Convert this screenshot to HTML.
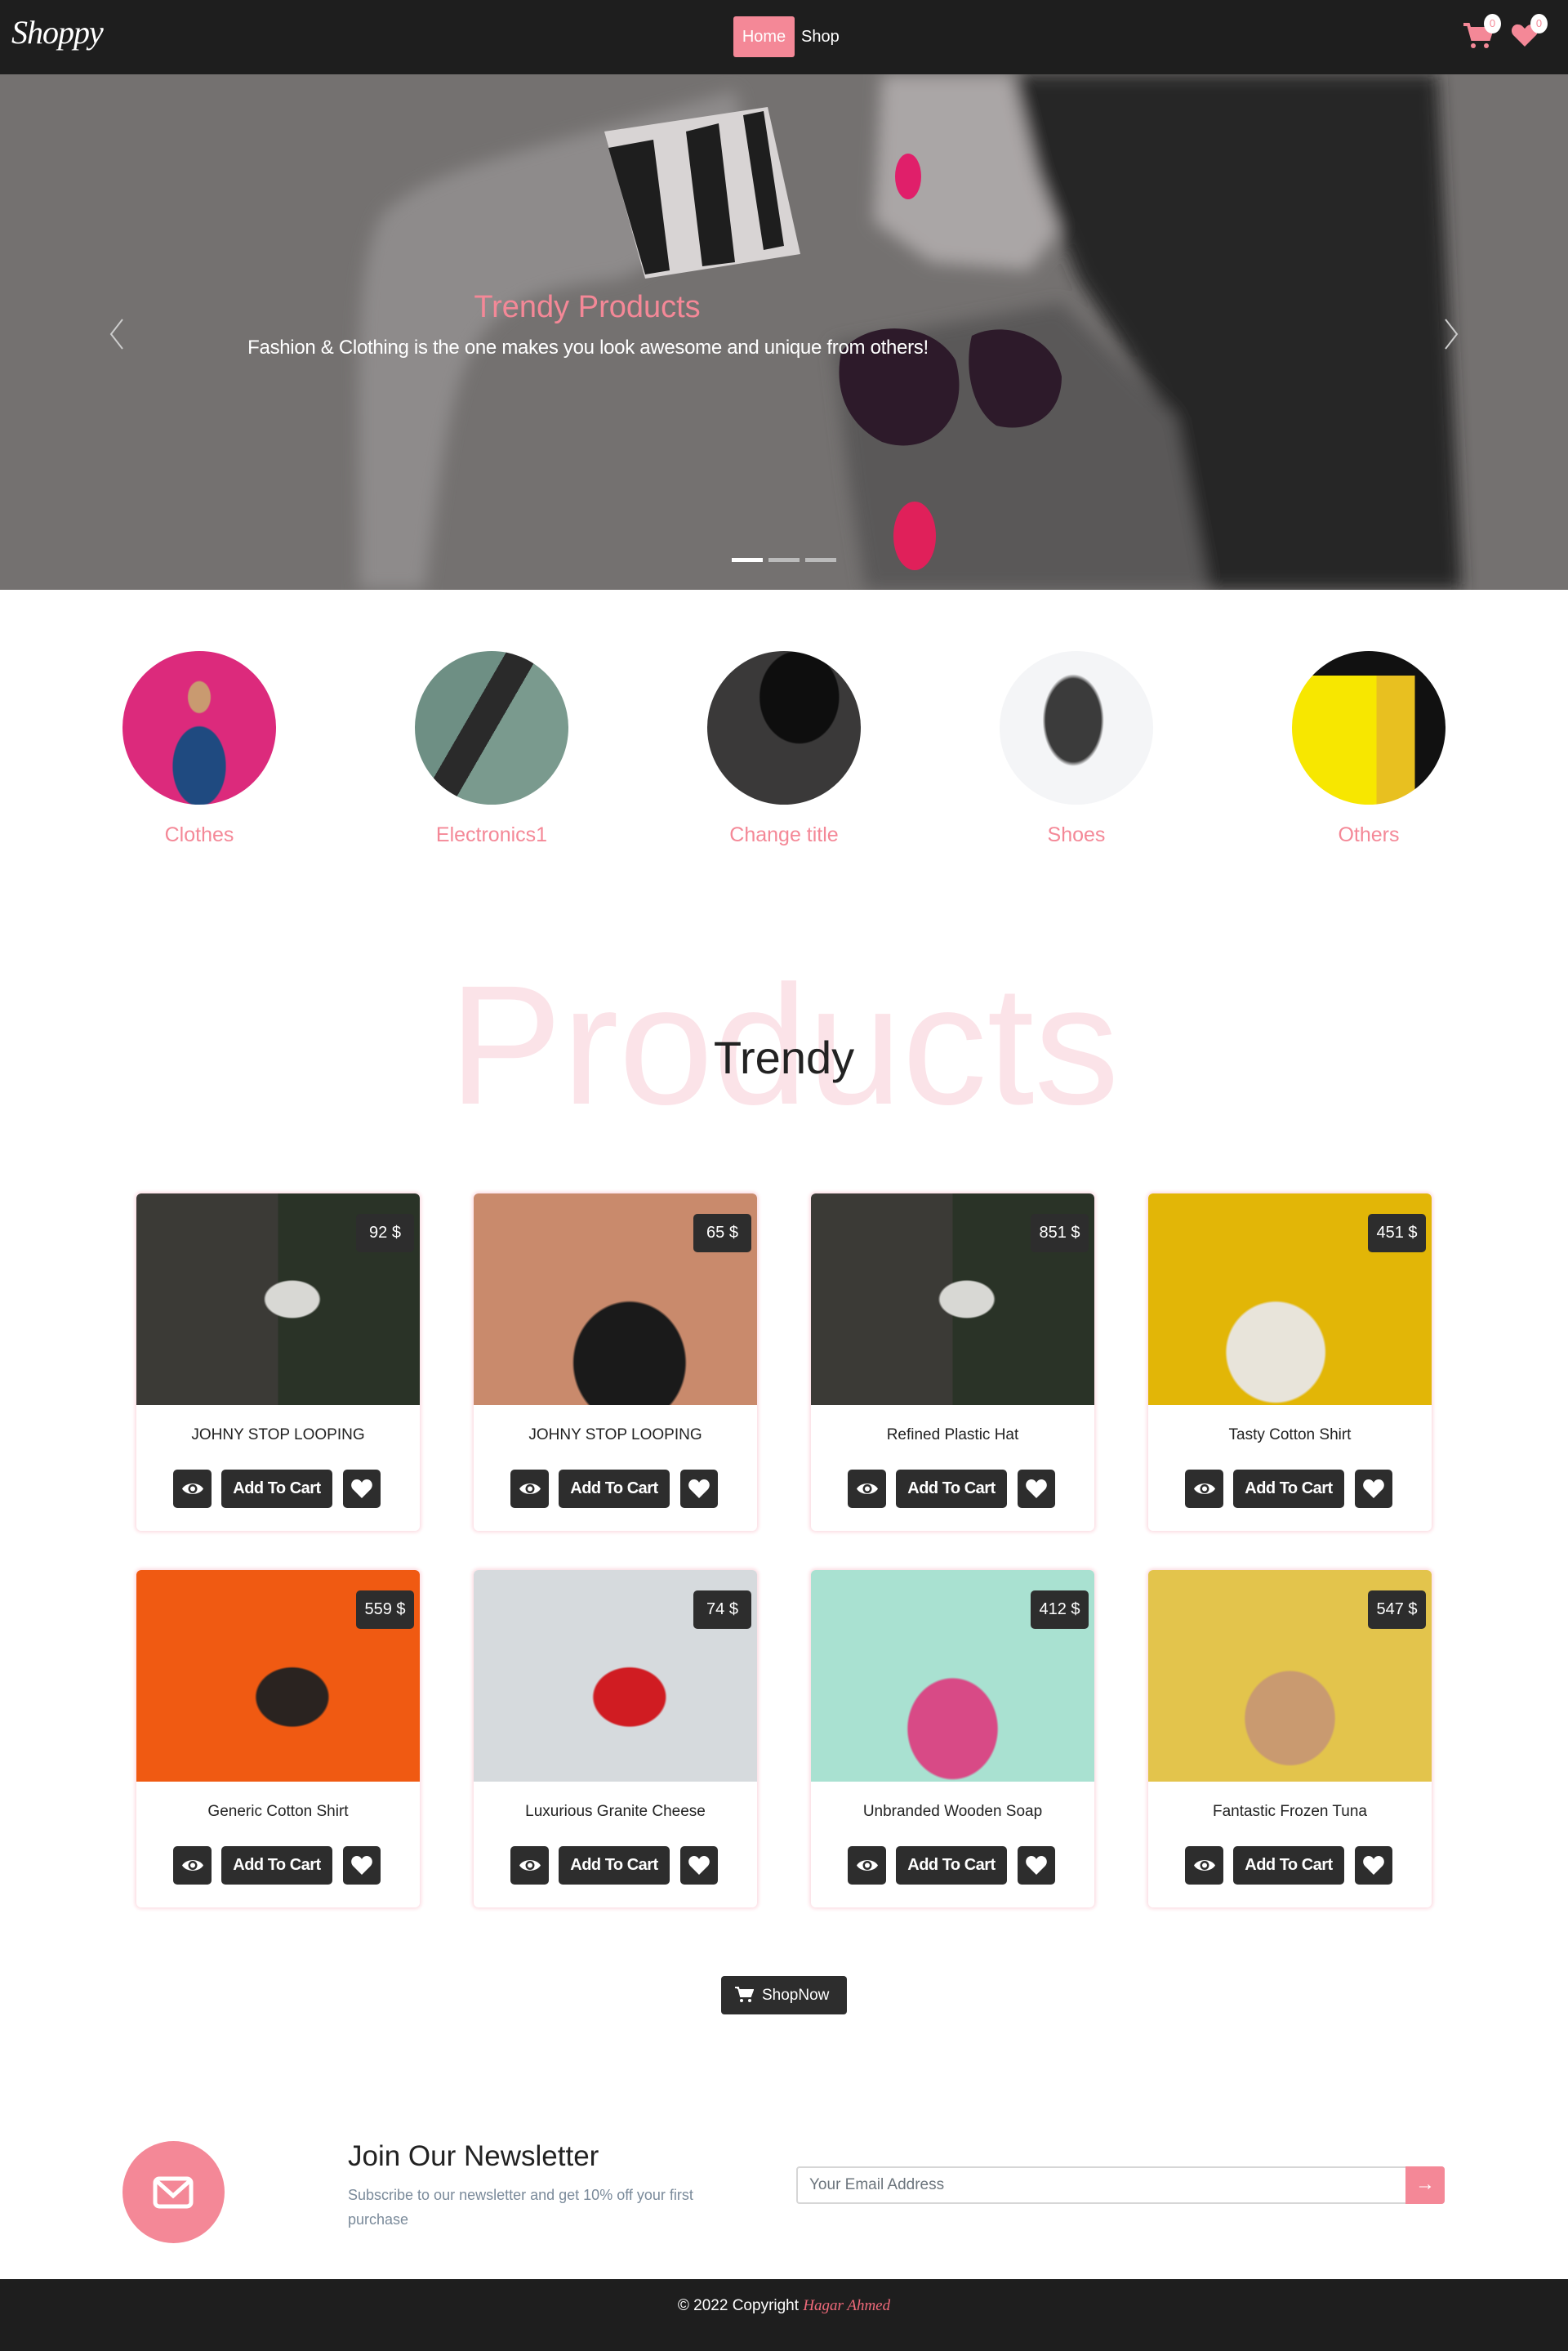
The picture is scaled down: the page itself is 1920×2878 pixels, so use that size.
<!DOCTYPE html>
<html><head><meta charset="utf-8">
<style>
*{box-sizing:border-box;margin:0;padding:0}
body{width:1920px;height:2878px;background:#fff;font-family:"Liberation Sans",sans-serif;position:relative;overflow:hidden}
.nav{position:absolute;left:0;top:0;width:1920px;height:91px;background:#1e1e1e}
.logo{position:absolute;left:14px;top:16px;font-family:"Liberation Serif",serif;font-style:italic;font-size:40px;color:#fff;letter-spacing:-1px}
.home{position:absolute;left:898px;top:20px;width:75px;height:50px;background:#f48897;border-radius:3px;color:#fff;font-size:20px;line-height:50px;text-align:center}
.shop{position:absolute;left:981px;top:20px;color:#fff;font-size:20px;line-height:50px}
.badge{position:absolute;width:21px;height:24px;border-radius:50%;background:#fff;color:#f48897;font-size:13px;text-align:center;line-height:24px}
.hero{position:absolute;left:0;top:91px;width:1920px;height:631px;overflow:hidden;background:#747170}
.cat{position:absolute;top:797px;width:188px;height:188px;border-radius:50%;overflow:hidden}
.catl{position:absolute;top:1008px;width:300px;text-align:center;color:#f48897;font-size:25px;font-weight:300}
.big{position:absolute;left:0;width:1920px;top:1150px;text-align:center;font-size:208px;color:#fbe3e8;line-height:260px}
.trendy{position:absolute;left:0;width:1920px;top:1262px;text-align:center;font-size:56px;color:#222;font-weight:300}
.card{position:absolute;width:347px;height:413px;background:#fff;border-radius:6px;box-shadow:0 0 4px 2px #fcdde3;overflow:hidden}
.img{position:absolute;left:0;top:0;width:347px;height:259px}
.price{position:absolute;right:7px;top:25px;width:71px;height:47px;background:#2d2d2d;border-radius:5px;color:#fff;font-size:20px;text-align:center;line-height:47px}
.title{position:absolute;left:0;top:285px;width:347px;text-align:center;font-size:19px;color:#222}
.btns{position:absolute;left:0;top:338px;width:347px;height:47px}
.b{position:absolute;top:0;height:47px;background:#2d2d2d;border-radius:5px;color:#fff;font-weight:bold;font-size:20px;text-align:center;line-height:47px;letter-spacing:-0.5px}
.shopnow{position:absolute;left:883px;top:2419px;width:154px;height:47px;background:#2d2d2d;border-radius:4px;color:#fff;font-size:19px;line-height:47px;padding-left:50px}
.foot{position:absolute;left:0;top:2790px;width:1920px;height:88px;background:#1e1e1e;color:#fff;font-size:19px;text-align:center;line-height:66px}
</style></head><body>
<div class="nav">
 <div class="logo">Shoppy</div>
 <div class="home">Home</div><div class="shop">Shop</div>
 <svg style="position:absolute;left:1790px;top:26px" width="40" height="36" viewBox="0 0 40 36"><path d="M2 4h6l5 18h20l4-13H10" fill="none" stroke="#f48897" stroke-width="4"/><rect x="11" y="9" width="24" height="12" fill="#f48897"/><circle cx="14" cy="30" r="3" fill="#f48897"/><circle cx="30" cy="30" r="3" fill="#f48897"/></svg>
 <div class="badge" style="left:1817px;top:17px">0</div>
 <svg style="position:absolute;left:1850px;top:28px" width="34" height="30" viewBox="0 0 34 30"><path d="M17 29L3 15C-2 9 3 1 9 2c4 0 6 3 8 5 2-2 4-5 8-5 6-1 11 7 6 13z" fill="#f48897"/></svg>
 <div class="badge" style="left:1874px;top:17px">0</div>
</div>
<div class="hero">
 <svg width="1920" height="631" viewBox="0 0 1920 631">
  <defs><filter id="bl"><feGaussianBlur stdDeviation="10"/></filter></defs>
  <rect width="1920" height="631" fill="#747170"/>
  <g filter="url(#bl)">
  <path d="M440 631 C440 400 430 230 470 170 C520 120 620 100 760 60 L900 20 L940 180 C860 200 800 230 760 250 C560 270 560 330 520 631Z" fill="#8e8b8b"/>
  <path d="M1080 0 L1280 0 L1320 160 L1260 240 L1140 230 L1070 180Z" fill="#aaa6a6"/>
  <path d="M1240 0 L1760 0 L1790 631 L1460 631 L1420 400 L1320 250 L1270 120Z" fill="#262525"/>
  <path d="M1020 330 L1300 280 L1440 420 L1480 631 L1060 631 L1040 500Z" fill="#5a5858"/>
  </g>
  <g>
  <path d="M740 70 L940 40 L980 220 L790 250Z" fill="#d8d4d4"/>
  <path d="M745 90 L800 80 L820 240 L790 245Z M840 70 L880 60 L900 230 L860 235Z M910 50 L935 45 L960 210 L935 215Z" fill="#1e1e1e"/>
  </g>
  <path d="M1030 340 C1060 300 1140 300 1170 350 C1190 420 1140 470 1080 450 C1040 430 1020 390 1030 340Z" fill="#2d1a2a"/>
  <path d="M1190 320 C1230 300 1290 320 1300 370 C1300 420 1260 440 1220 430 C1190 410 1180 360 1190 320Z" fill="#2d1a2a"/>
  <ellipse cx="1120" cy="565" rx="26" ry="42" fill="#e0205a"/>
  <ellipse cx="1112" cy="125" rx="16" ry="28" fill="#e01f6a"/>
  <rect x="896" y="592" width="38" height="5" fill="#fff"/><rect x="941" y="592" width="38" height="5" fill="#bbb"/><rect x="986" y="592" width="38" height="5" fill="#bbb"/>
  <path d="M150 300 L136 318 L150 336" fill="none" stroke="#ccc" stroke-width="2"/>
  <path d="M1770 300 L1784 318 L1770 336" fill="none" stroke="#ccc" stroke-width="2"/>
 </svg>
 <div style="position:absolute;left:519px;top:264px;width:400px;text-align:center;color:#f48897;font-size:38px">Trendy Products</div>
 <div style="position:absolute;left:230px;top:321px;width:980px;text-align:center;color:#fff;font-size:24px;letter-spacing:-0.3px">Fashion &amp; Clothing is the one makes you look awesome and unique from others!</div>
</div>

<div class="cat" style="left:150px;background:radial-gradient(ellipse at 50% 30%,#c99a70 0 10%,transparent 11%),radial-gradient(ellipse at 50% 75%,#1f4a80 0 24%,transparent 25%),#dc2a7c"></div>
<div class="cat" style="left:508px;background:linear-gradient(120deg,#6e8f84 0 38%,#2a2a2a 38% 52%,#7a9a8e 52%)"></div>
<div class="cat" style="left:866px;background:radial-gradient(ellipse at 60% 30%,#0e0e0e 0 30%,transparent 31%),#3a3939"></div>
<div class="cat" style="left:1224px;background:radial-gradient(ellipse 20% 30% at 48% 45%,#3b3b3b 0 90%,transparent 100%),#f4f5f7"></div>
<div class="cat" style="left:1582px;background:linear-gradient(180deg,#111 0 16%,transparent 16%),linear-gradient(90deg,#f7e700 0 55%,#e8c020 55% 80%,#111 80%)"></div>
<div class="catl" style="left:94px">Clothes</div>
<div class="catl" style="left:452px">Electronics1</div>
<div class="catl" style="left:810px">Change title</div>
<div class="catl" style="left:1168px">Shoes</div>
<div class="catl" style="left:1526px">Others</div>

<div class="big">Products</div>
<div class="trendy">Trendy</div>

<div class="card" style="left:167px;top:1461px"><div class="img" style="background:radial-gradient(ellipse at 55% 50%,#d8d8d4 0 12%,transparent 13%),linear-gradient(90deg,#3b3a36 0 50%,#2a3327 50%)"></div><div class="price">92 $</div><div class="title">JOHNY STOP LOOPING</div><div class="btns"></div></div>
<div class="card" style="left:580px;top:1461px"><div class="img" style="background:radial-gradient(ellipse at 55% 80%,#1a1a1a 0 25%,transparent 26%),#c98a6c"></div><div class="price">65 $</div><div class="title">JOHNY STOP LOOPING</div><div class="btns"></div></div>
<div class="card" style="left:993px;top:1461px"><div class="img" style="background:radial-gradient(ellipse at 55% 50%,#d8d8d4 0 12%,transparent 13%),linear-gradient(90deg,#3b3a36 0 50%,#2a3327 50%)"></div><div class="price">851 $</div><div class="title">Refined Plastic Hat</div><div class="btns"></div></div>
<div class="card" style="left:1406px;top:1461px"><div class="img" style="background:radial-gradient(ellipse at 45% 75%,#e8e4da 0 22%,transparent 23%),#e2b607"></div><div class="price">451 $</div><div class="title">Tasty Cotton Shirt</div><div class="btns"></div></div>
<div class="card" style="left:167px;top:1922px"><div class="img" style="background:radial-gradient(ellipse at 55% 60%,#2a2320 0 16%,transparent 17%),#f05a12"></div><div class="price">559 $</div><div class="title">Generic Cotton Shirt</div><div class="btns"></div></div>
<div class="card" style="left:580px;top:1922px"><div class="img" style="background:radial-gradient(ellipse at 55% 60%,#d01c22 0 16%,transparent 17%),#d6dadd"></div><div class="price">74 $</div><div class="title">Luxurious Granite Cheese</div><div class="btns"></div></div>
<div class="card" style="left:993px;top:1922px"><div class="img" style="background:radial-gradient(ellipse at 50% 75%,#d84a86 0 22%,transparent 23%),#a9e1d1"></div><div class="price">412 $</div><div class="title">Unbranded Wooden Soap</div><div class="btns"></div></div>
<div class="card" style="left:1406px;top:1922px"><div class="img" style="background:radial-gradient(ellipse at 50% 70%,#c99a70 0 22%,transparent 23%),#e3c44c"></div><div class="price">547 $</div><div class="title">Fantastic Frozen Tuna</div><div class="btns"></div></div>

<div class="shopnow"><svg style="position:absolute;left:16px;top:12px" width="24" height="22" viewBox="0 0 24 22"><path d="M1 2h4l3 11h12l3-8H6" fill="#fff" stroke="#fff" stroke-width="2"/><circle cx="9" cy="18" r="2" fill="#fff"/><circle cx="19" cy="18" r="2" fill="#fff"/></svg>ShopNow</div>

<div style="position:absolute;left:150px;top:2621px;width:125px;height:125px;border-radius:50%;background:#f48897"></div>
<svg style="position:absolute;left:187px;top:2664px" width="50" height="40" viewBox="0 0 50 40"><rect x="3" y="3" width="44" height="34" rx="5" fill="none" stroke="#fff" stroke-width="5"/><path d="M5 6l20 18 20-18" fill="none" stroke="#fff" stroke-width="5"/></svg>
<div style="position:absolute;left:426px;top:2620px;font-size:35px;color:#222;font-weight:300">Join Our Newsletter</div>
<div style="position:absolute;left:426px;top:2672px;width:500px;font-size:18px;color:#7a8a9a;line-height:30px">Subscribe to our newsletter and get 10% off your first purchase</div>
<div style="position:absolute;left:975px;top:2652px;width:794px;height:46px;border:2px solid #d6d6d6;border-radius:4px"></div>
<div style="position:absolute;left:991px;top:2664px;font-size:19px;color:#6c757d">Your Email Address</div>
<div style="position:absolute;left:1721px;top:2652px;width:48px;height:46px;background:#f48897;border-radius:0 4px 4px 0;color:#fff;font-size:24px;text-align:center;line-height:44px;font-weight:bold">→</div>

<div class="foot">© 2022 Copyright <span style="color:#f06a7a;font-family:'Liberation Serif',serif;font-style:italic">Hagar Ahmed</span></div>

<script>
document.querySelectorAll('.btns').forEach(function(b){
b.innerHTML='<div class="b" style="left:45px;width:47px"><svg width="30" height="47" viewBox="0 0 30 47"><path d="M2 23.5C7 15 23 15 28 23.5 23 32 7 32 2 23.5Z" fill="#fff"/><circle cx="15" cy="23.5" r="5.5" fill="#2d2d2d"/><circle cx="15" cy="23.5" r="3" fill="#fff"/></svg></div>'+
'<div class="b" style="left:104px;width:136px">Add To Cart</div>'+
'<div class="b" style="left:253px;width:46px"><svg width="30" height="47" viewBox="0 0 30 47"><path d="M15 35L4 24C0 19 3 12 9 12c3 0 5 2 6 4 1-2 3-4 6-4 6 0 9 7 5 12z" fill="#fff"/></svg></div>';
});
</script>
</body></html>
